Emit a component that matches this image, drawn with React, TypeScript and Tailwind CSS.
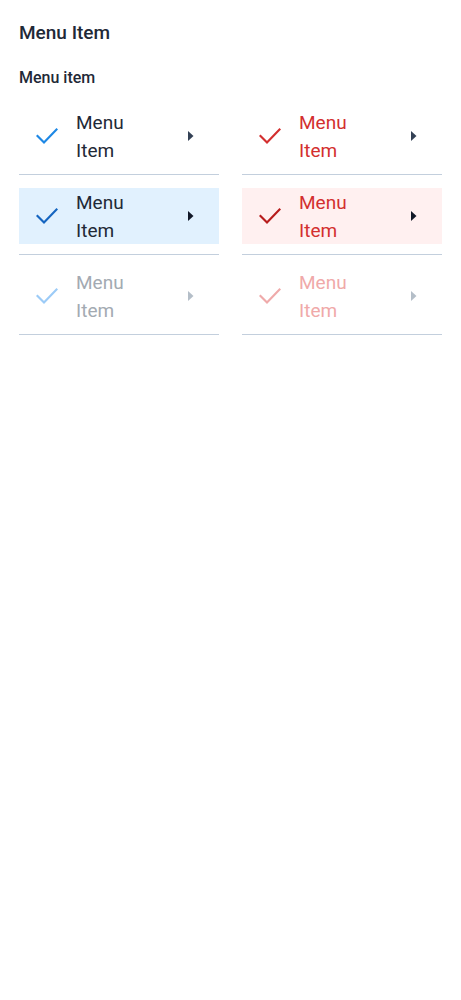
import React from "react";

type Tone = "primary" | "danger";
type State = "default" | "selected" | "disabled";

const styles: Record<Tone, Record<State, { row: string; check: string; text: string; arrow: string }>> = {
  primary: {
    default: { row: "", check: "text-[#1e88e5]", text: "text-[#1f2937]", arrow: "text-[#334155]" },
    selected: { row: "bg-[#e1f1fe]", check: "text-[#1565c0]", text: "text-[#1f2937]", arrow: "text-[#111827]" },
    disabled: { row: "", check: "text-[#9ccbf7]", text: "text-[#a3aab2]", arrow: "text-[#b4bec8]" },
  },
  danger: {
    default: { row: "", check: "text-[#d32f2f]", text: "text-[#d32f2f]", arrow: "text-[#334155]" },
    selected: { row: "bg-[#fff0f0]", check: "text-[#b71c1c]", text: "text-[#d32f2f]", arrow: "text-[#111827]" },
    disabled: { row: "", check: "text-[#efaaaa]", text: "text-[#f0a9a9]", arrow: "text-[#b4bec8]" },
  },
};

function CheckIcon({ className }: { className: string }) {
  return (
    <svg width="22" height="18" viewBox="0 0 22 18" className={className} fill="none">
      <polyline points="1.5,9 8,15.5 20.5,2.5" stroke="currentColor" strokeWidth="2.2" strokeLinecap="square" />
    </svg>
  );
}

function ArrowRight({ className }: { className: string }) {
  return (
    <svg width="6" height="10" viewBox="0 0 6 10" className={className}>
      <path d="M0 0L5.5 5L0 10Z" fill="currentColor" />
    </svg>
  );
}

function MenuItem({ tone, state }: { tone: Tone; state: State }) {
  const s = styles[tone][state];
  return (
    <div className="border-b border-[#c3cfdd] pb-[10px]">
      <div className={`flex h-14 items-center pl-[17px] pr-[25px] ${s.row}`}>
        <CheckIcon className={s.check} />
        <span className={`ml-[18px] mt-[2px] w-[84px] text-[19px] leading-[28px] ${s.text}`}>Menu Item</span>
        <div className="flex-1" />
        <ArrowRight className={s.arrow} />
      </div>
    </div>
  );
}

export default function App() {
  const states: State[] = ["default", "selected", "disabled"];
  return (
    <div className="min-h-[1000px] bg-white px-[19px] pt-[20px] font-['Roboto',sans-serif]">
      <h1 className="text-[19px] leading-[26px] font-medium text-[#1f2937]">Menu Item</h1>
      <h2 className="mt-[21px] text-[16px] leading-[22px] font-medium text-[#1f2937]">Menu item</h2>
      <div className="mt-[19px] grid grid-cols-2 gap-x-[23px] gap-y-[13px]">
        {states.map((st) => (
          <React.Fragment key={st}>
            <MenuItem tone="primary" state={st} />
            <MenuItem tone="danger" state={st} />
          </React.Fragment>
        ))}
      </div>
    </div>
  );
}
